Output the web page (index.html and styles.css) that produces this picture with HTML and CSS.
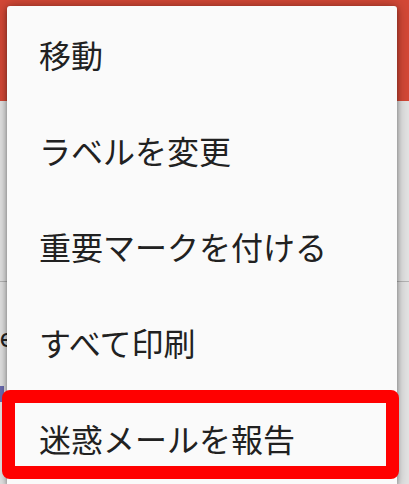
FILE: index.html
```html
<!DOCTYPE html>
<html lang="ja">
<head>
  <meta charset="UTF-8" />
  <meta name="viewport" content="width=device-width, initial-scale=1.0"/>
  <title>メニュー</title>
  <link rel="stylesheet" href="styles.css">
</head>
<body>
  <div class="screen">
    <div class="appbar"></div>

    <div class="list">
      <div class="row first">
        <span class="peek">こと</span>
      </div>
      <div class="row second">
        <span class="peek small">ee</span>
        <span class="tag"></span>
      </div>
    </div>

    <ul class="menu">
      <li>移動</li>
      <li>ラベルを変更</li>
      <li>重要マークを付ける</li>
      <li>すべて印刷</li>
      <li>迷惑メールを報告</li>
    </ul>

    <div class="mark"></div>
  </div>
</body>
</html>
```

FILE: styles.css
```css
body {
  margin: 0;
  background: #e2e2e2;
  font-family: 'Noto Sans CJK JP', 'Noto Sans', sans-serif;
}
.screen {
  position: relative;
  width: 409px;
  height: 484px;
  overflow: hidden;
  background: #e2e2e2;
}
.appbar {
  height: 101px;
  background: #d34836;
}
.list {
  display: flex;
  flex-direction: column;
}
.row {
  border-bottom: 1px solid #b4b4b4;
  color: #222;
}
.row.first {
  height: 181px;
  padding-top: 38px;
  box-sizing: border-box;
}
.row.second {
  height: 200px;
  padding-top: 36px;
  box-sizing: border-box;
  border-bottom: none;
}
.peek {
  display: block;
  margin-left: -29px;
  font-size: 33px;
  line-height: 40px;
}
.peek.small {
  margin-left: -14px;
  font-family: 'Roboto', sans-serif;
  font-size: 26px;
}
.tag {
  display: block;
  width: 4px;
  height: 16px;
  margin-top: 28px;
  background: #6a6ab0;
}

/* popup menu */
.menu {
  position: absolute;
  top: 6px;
  left: 7px;
  width: 390px;
  margin: 0;
  padding: 0;
  list-style: none;
  background: #fafafa;
  border-radius: 3px;
  box-shadow: 0 2px 4px rgba(0, 0, 0, 0.3), 0 0 12px rgba(0, 0, 0, 0.35);
}
.menu li {
  height: 96px;
  display: flex;
  align-items: center;
  padding-left: 32px;
  font-size: 32px;
  color: #212121;
}

/* red annotation box */
.mark {
  position: absolute;
  left: 2px;
  top: 390px;
  width: 397px;
  height: 89px;
  box-sizing: border-box;
  border: 13px solid #ff0000;
  border-radius: 8px;
}
```
